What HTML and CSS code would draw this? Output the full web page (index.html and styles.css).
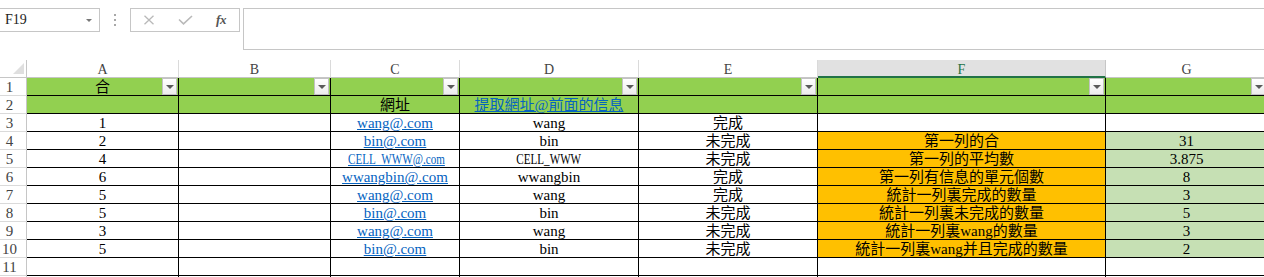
FILE: index.html
```html
<!DOCTYPE html>
<html lang="zh-Hant">
<head>
<meta charset="utf-8">
<title>Sheet</title>
<link rel="stylesheet" href="styles.css">
</head>
<body>
<div class="app">
  <div class="fbar">
    <div class="namebox"><span class="nbtext">F19</span><span class="caret"></span></div>
    <div class="vdots"><i></i><i></i><i></i></div>
    <div class="fbtns">
      <span class="slot"><svg width="12" height="10" viewBox="0 0 12 10"><path d="M1.5 0.8 L10.5 9.2 M10.5 0.8 L1.5 9.2" stroke="#b9b9b9" stroke-width="1.3" fill="none"/></svg></span>
      <span class="slot"><svg width="15" height="10" viewBox="0 0 15 10"><path d="M1 4.5 L5.5 8.8 L14 1" stroke="#b9b9b9" stroke-width="1.6" fill="none"/></svg></span>
      <span class="slot"><span class="fx">fx</span></span>
    </div>
    <div class="finput"></div>
  </div>

  <div class="sheet">
    <!-- header row -->
    <div class="corner"><span class="tri"></span></div>
    <div class="h">A</div><div class="h">B</div><div class="h">C</div><div class="h">D</div><div class="h">E</div><div class="h sel">F</div><div class="h">G</div>

    <!-- row 1 -->
    <div class="r">1</div>
    <div class="c g">合<span class="dd"></span></div>
    <div class="c g"><span class="dd"></span></div>
    <div class="c g"><span class="dd"></span></div>
    <div class="c g"><span class="dd"></span></div>
    <div class="c g"><span class="dd"></span></div>
    <div class="c g"><span class="dd"></span></div>
    <div class="c g"><span class="dd"></span></div>

    <!-- row 2 -->
    <div class="r">2</div>
    <div class="c g"></div>
    <div class="c g"></div>
    <div class="c g">網址</div>
    <div class="c g"><a class="lk" href="#">提取網址@前面的信息</a></div>
    <div class="c g"></div>
    <div class="c g"></div>
    <div class="c g"></div>

    <!-- row 3 -->
    <div class="r">3</div>
    <div class="c">1</div>
    <div class="c"></div>
    <div class="c"><a class="lk" href="#">wang@.com</a></div>
    <div class="c">wang</div>
    <div class="c">完成</div>
    <div class="c"></div>
    <div class="c"></div>

    <!-- row 4 -->
    <div class="r">4</div>
    <div class="c">2</div>
    <div class="c"></div>
    <div class="c"><a class="lk" href="#">bin@.com</a></div>
    <div class="c">bin</div>
    <div class="c">未完成</div>
    <div class="c o">第一列的合</div>
    <div class="c lg">31</div>

    <!-- row 5 -->
    <div class="r">5</div>
    <div class="c">4</div>
    <div class="c"></div>
    <div class="c"><a class="lk nw" href="#">CELL_WWW@.com</a></div>
    <div class="c"><span class="nw">CELL_WWW</span></div>
    <div class="c">未完成</div>
    <div class="c o">第一列的平均數</div>
    <div class="c lg">3.875</div>

    <!-- row 6 -->
    <div class="r">6</div>
    <div class="c">6</div>
    <div class="c"></div>
    <div class="c"><a class="lk" href="#">wwangbin@.com</a></div>
    <div class="c">wwangbin</div>
    <div class="c">完成</div>
    <div class="c o">第一列有信息的單元個數</div>
    <div class="c lg">8</div>

    <!-- row 7 -->
    <div class="r">7</div>
    <div class="c">5</div>
    <div class="c"></div>
    <div class="c"><a class="lk" href="#">wang@.com</a></div>
    <div class="c">wang</div>
    <div class="c">完成</div>
    <div class="c o">統計一列裏完成的數量</div>
    <div class="c lg">3</div>

    <!-- row 8 -->
    <div class="r">8</div>
    <div class="c">5</div>
    <div class="c"></div>
    <div class="c"><a class="lk" href="#">bin@.com</a></div>
    <div class="c">bin</div>
    <div class="c">未完成</div>
    <div class="c o">統計一列裏未完成的數量</div>
    <div class="c lg">5</div>

    <!-- row 9 -->
    <div class="r">9</div>
    <div class="c">3</div>
    <div class="c"></div>
    <div class="c"><a class="lk" href="#">wang@.com</a></div>
    <div class="c">wang</div>
    <div class="c">未完成</div>
    <div class="c o">統計一列裏wang的數量</div>
    <div class="c lg">3</div>

    <!-- row 10 -->
    <div class="r">10</div>
    <div class="c">5</div>
    <div class="c"></div>
    <div class="c"><a class="lk" href="#">bin@.com</a></div>
    <div class="c">bin</div>
    <div class="c">未完成</div>
    <div class="c o">統計一列裏wang并且完成的數量</div>
    <div class="c lg">2</div>

    <!-- row 11 -->
    <div class="r">11</div>
    <div class="c"></div><div class="c"></div><div class="c"></div><div class="c"></div><div class="c"></div><div class="c"></div><div class="c"></div>

    <!-- row 12 (only its top edge is in view) -->
    <div class="r"></div>
    <div class="c"></div><div class="c"></div><div class="c"></div><div class="c"></div><div class="c"></div><div class="c"></div><div class="c"></div>
  </div>
</div>
</body>
</html>
```
FILE: styles.css
```css
* { box-sizing: border-box; }

html, body {
  margin: 0;
  padding: 0;
  background: #fff;
  overflow: hidden;
}

body {
  width: 1264px;
  height: 277px;
  font-family: "Liberation Serif", "Noto Sans CJK TC", serif;
  color: #000;
}

.app {
  width: 1264px;
  height: 277px;
  overflow: hidden;
}

/* formula bar */
.fbar {
  display: flex;
  align-items: flex-start;
  height: 60px;
  padding-top: 8px;
}

.namebox {
  width: 100px;
  height: 24px;
  border: 1px solid #c6c6c6;
  border-left: none;
  display: flex;
  align-items: center;
  justify-content: space-between;
  padding: 0 7px 0 5px;
  font-size: 14px;
  color: #222;
}

.caret {
  width: 0;
  height: 0;
  border-left: 3px solid transparent;
  border-right: 3px solid transparent;
  border-top: 3px solid #777;
}

.vdots {
  width: 30px;
  height: 24px;
  display: flex;
  flex-direction: column;
  align-items: center;
  justify-content: center;
  gap: 3px;
}

.vdots i {
  display: block;
  width: 2px;
  height: 2px;
  background: #a8a8a8;
}

.fbtns {
  width: 110px;
  height: 24px;
  border: 1px solid #c6c6c6;
  display: flex;
  align-items: center;
}

.slot {
  width: 36px;
  height: 22px;
  display: flex;
  align-items: center;
  justify-content: center;
}

.fx {
  font-family: "Liberation Serif", serif;
  font-style: italic;
  font-weight: bold;
  font-size: 13px;
  color: #555;
  letter-spacing: -0.5px;
}

.finput {
  flex: 1;
  height: 42px;
  margin-left: 3px;
  border: 1px solid #c6c6c6;
  border-right: none;
}

/* sheet */
.sheet {
  display: grid;
  grid-template-columns: 27px 152px 152px 129px 179px 179px 288px 162px;
  grid-auto-rows: 18px;
  width: max-content;
}

.corner {
  position: relative;
  border-right: 1px solid #c6c6c6;
  border-bottom: 1px solid #c6c6c6;
}

.tri {
  position: absolute;
  right: 2px;
  bottom: 3px;
  width: 0;
  height: 0;
  border-left: 11px solid transparent;
  border-bottom: 11px solid #dfdfdf;
}

.h {
  border-right: 1px solid #dadada;
  border-bottom: 1px solid #c6c6c6;
  font-size: 14px;
  line-height: 17px;
  padding-top: 1px;
  color: #444;
  text-align: center;
}

.h.sel {
  background: #e1e1e1;
  color: #217346;
  border-bottom: 2px solid #217346;
  border-right-color: #c6c6c6;
}

.r {
  border-right: 1px solid #c6c6c6;
  border-bottom: 1px solid #dadada;
  font-size: 15px;
  line-height: 17px;
  padding-top: 1px;
  color: #444;
  text-align: center;
  padding-right: 7px;
}

.c {
  position: relative;
  border-right: 1px solid #000;
  border-bottom: 1px solid #000;
  font-size: 15px;
  line-height: 17px;
  padding-top: 1px;
  text-align: center;
  white-space: nowrap;
}

.nw {
  display: inline-block;
  transform: scaleX(0.74);
}

.g { background: #92d050; }
.o { background: #ffc000; }
.lg { background: #c6e0b4; }

.lk {
  color: #0563c1;
  text-decoration: underline;
  text-underline-offset: 1px;
}

.dd {
  position: absolute;
  top: 0;
  right: 1px;
  width: 15px;
  height: 17px;
  border: 1px solid #c2c2c2;
  background: linear-gradient(#ffffff, #ececec);
  display: flex;
  align-items: center;
  justify-content: center;
}

.dd::after {
  content: "";
  width: 0;
  height: 0;
  border-left: 4px solid transparent;
  border-right: 4px solid transparent;
  border-top: 4px solid #5a5a5a;
}
```
